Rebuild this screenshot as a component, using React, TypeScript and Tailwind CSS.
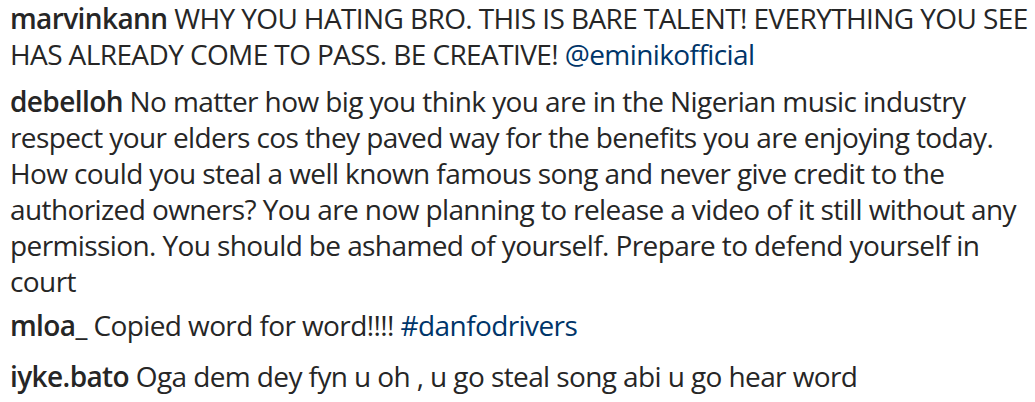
import React from "react";

const U = ({ children }: { children: React.ReactNode }) => (
  <span className="font-semibold">{children}</span>
);
const L = ({ children }: { children: React.ReactNode }) => (
  <span className="text-[#003569]">{children}</span>
);

export default function App() {
  return (
    <div
      className="w-[1035px] h-[402px] bg-white overflow-hidden pl-[10px] text-[#262626] text-[28px] leading-[36px] tracking-[-0.6px]"
      style={{ fontFamily: '"Open Sans", "Noto Sans", sans-serif' }}
    >
      <div className="flex flex-col">
        <div>
          <div className="whitespace-nowrap">
            <U>marvinkann</U> WHY YOU HATING BRO. THIS IS BARE TALENT! EVERYTHING YOU SEE
          </div>
          <div className="whitespace-nowrap">
            HAS ALREADY COME TO PASS. BE CREATIVE! <L>@eminikofficial</L>
          </div>
        </div>
        <div className="mt-[11px]">
          <div className="whitespace-nowrap">
            <U>debelloh</U> No matter how big you think you are in the Nigerian music industry
          </div>
          <div className="whitespace-nowrap">
            respect your elders cos they paved way for the benefits you are enjoying today.
          </div>
          <div className="whitespace-nowrap">
            How could you steal a well known famous song and never give credit to the
          </div>
          <div className="whitespace-nowrap">
            authorized owners? You are now planning to release a video of it still without any
          </div>
          <div className="whitespace-nowrap">
            permission. You should be ashamed of yourself. Prepare to defend yourself in
          </div>
          <div className="whitespace-nowrap">court</div>
        </div>
        <div className="mt-[8px] whitespace-nowrap">
          <U>mloa_</U> Copied word for word!!!! <L>#danfodrivers</L>
        </div>
        <div className="mt-[15px] whitespace-nowrap">
          <U>iyke.bato</U> Oga dem dey fyn u oh , u go steal song abi u go hear word
        </div>
      </div>
    </div>
  );
}
